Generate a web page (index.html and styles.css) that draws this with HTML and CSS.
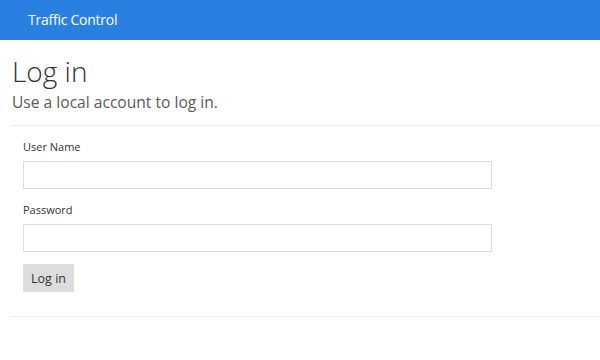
FILE: index.html
```html
<!DOCTYPE html>
<html lang="en">
<head>
<meta charset="utf-8">
<title>Log in - Traffic Control</title>
<link rel="stylesheet" href="styles.css">
</head>
<body>
<header class="navbar">
  <a class="brand" href="#">Traffic Control</a>
</header>
<main class="content">
  <h1 class="title">Log in</h1>
  <h2 class="subtitle">Use a local account to log in.</h2>
  <hr class="rule">
  <form class="login-form">
    <div class="field">
      <label class="label" for="user">User Name</label>
      <input class="input" id="user" type="text">
    </div>
    <div class="field">
      <label class="label" for="pass">Password</label>
      <input class="input" id="pass" type="password">
    </div>
    <button class="btn" type="button">Log in</button>
  </form>
  <hr class="rule rule-bottom">
</main>
</body>
</html>
```
FILE: styles.css
```css
* { box-sizing: border-box; }
html, body { margin: 0; padding: 0; background: #fff; }
body {
  font-family: "Open Sans", "Noto Sans", "Liberation Sans", sans-serif;
  color: #333;
  overflow: hidden;
}
.navbar {
  height: 40px;
  background: #2a80e1;
  display: flex;
  align-items: center;
  padding-left: 28px;
}
.brand {
  color: #fff;
  text-decoration: none;
  font-size: 14px;
  letter-spacing: -0.25px;
  line-height: 1;
  padding-bottom: 1px;
}
.content {
  padding-left: 11px;
}
.title {
  margin: 13px 0 0 1px;
  font-size: 28px;
  font-weight: 300;
  line-height: 36px;
  color: #333;
}
.subtitle {
  margin: 2px 0 0 1px;
  font-size: 15.6px;
  font-weight: 400;
  line-height: 22px;
  color: #5a5a5a;
}
.rule {
  margin: 12px 0 0 0;
  border: 0;
  border-top: 1px solid #eee;
  height: 0;
}
.login-form {
  padding: 12px 0 0 12px;
  display: flex;
  flex-direction: column;
  align-items: flex-start;
}
.field {
  display: flex;
  flex-direction: column;
  margin-bottom: 12px;
}
.label {
  font-size: 11px;
  line-height: 18px;
  color: #333;
  margin-bottom: 5px;
}
.input {
  width: 469px;
  height: 28px;
  border: 1px solid #ddd;
  background: #fff;
  margin: 0;
  padding: 4px 6px;
  font: inherit;
}
.btn {
  height: 28px;
  width: 51px;
  padding: 0;
  border: 0;
  background: #ddd;
  color: #333;
  font-family: inherit;
  font-size: 12.5px;
}
.rule-bottom {
  margin-top: 24px;
}
```
